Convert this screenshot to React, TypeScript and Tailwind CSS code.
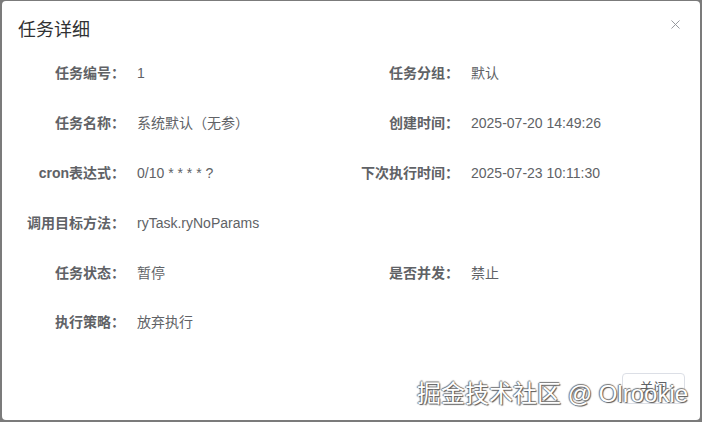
import { X } from "lucide-react";

type Field = { label: string; value: string };

const rows: [Field, Field | null][] = [
  [{ label: "任务编号：", value: "1" }, { label: "任务分组：", value: "默认" }],
  [{ label: "任务名称：", value: "系统默认（无参）" }, { label: "创建时间：", value: "2025-07-20 14:49:26" }],
  [{ label: "cron表达式：", value: "0/10 * * * * ?" }, { label: "下次执行时间：", value: "2025-07-23 10:11:30" }],
  [{ label: "调用目标方法：", value: "ryTask.ryNoParams" }, null],
  [{ label: "任务状态：", value: "暂停" }, { label: "是否并发：", value: "禁止" }],
  [{ label: "执行策略：", value: "放弃执行" }, null],
];

function Item({ f }: { f: Field | null }) {
  if (!f) return <div />;
  return (
    <div className="flex items-center h-[49.8px]">
      <div className="w-[120px] shrink-0 pr-3 text-right font-bold text-[#606266] whitespace-nowrap">{f.label}</div>
      <div className="text-[#606266] whitespace-nowrap">{f.value}</div>
    </div>
  );
}

export default function App() {
  return (
    <div
      className="w-[702px] h-[422px] bg-[#7b7b7b] pl-[2px] pr-[2px] pt-[1px] pb-[2px] overflow-hidden"
      style={{ fontFamily: '"Liberation Sans", "Noto Sans CJK SC", sans-serif' }}
    >
      <div className="relative h-full bg-white rounded-[4px] flex flex-col text-[14px]">
        <div className="flex items-center justify-between pl-4 pr-[17px] pt-[11px] h-[47px]">
          <span className="text-[18px] text-[#303133] leading-6">任务详细</span>
          <X className="h-[15px] w-[15px] text-[#909399] -mt-[12px]" strokeWidth={1.5} />
        </div>
        <div className="grid grid-cols-[334px_334px] pl-[15px] pt-[1px]">
          {rows.map(([a, b], i) => (
            <div key={i} className="contents">
              <Item f={a} />
              <Item f={b} />
            </div>
          ))}
        </div>
        <div className="flex justify-end pr-[15px] mt-[25px]">
          <button className="w-[63px] h-[31px] rounded-[4px] border border-[#dcdfe6] text-[#606266] text-[14px]">关闭</button>
        </div>
        <div
          className="absolute left-[415px] top-[378px] text-[24px] leading-[30px] text-white whitespace-nowrap"
          style={{ textShadow: "1px 1px 1px #555, -1px 0 1px #777, 0 -1px 1px #777" }}
        >
          掘金技术社区 @ Olrookie
        </div>
      </div>
    </div>
  );
}
